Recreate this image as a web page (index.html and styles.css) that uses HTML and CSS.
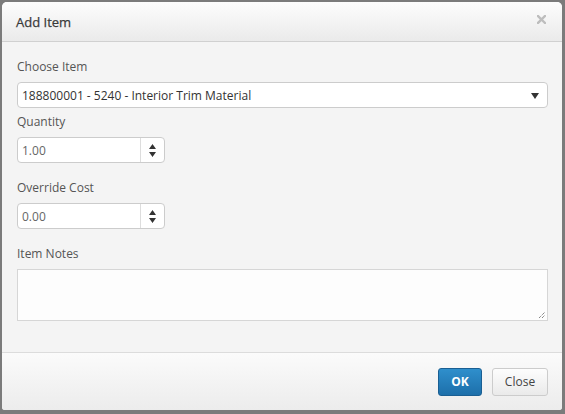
FILE: index.html
```html
<!DOCTYPE html>
<html>
<head>
<meta charset="utf-8">
<link rel="stylesheet" href="styles.css">
</head>
<body>
<div class="dialog">
  <div class="header">
    <span class="title">Add Item</span>
    <svg class="close-x" width="9" height="9" viewBox="0 0 9 9"><path d="M1 1L8 8M8 1L1 8" stroke="#bdbdbd" stroke-width="2.4" stroke-linecap="square"/></svg>
  </div>
  <div class="body">
    <label class="label lbl-choose">Choose Item</label>
    <div class="select">
      <span>188800001 - 5240 - Interior Trim Material</span>
      <svg class="caret" width="8" height="6" viewBox="0 0 8 6"><path d="M0 0H8L4 6Z" fill="#333"/></svg>
    </div>
    <label class="label lbl-qty">Quantity</label>
    <div class="spin">
      <span class="val">1.00</span>
      <span class="arrows"><svg width="7" height="13" viewBox="0 0 7 13"><path d="M3.5 0L7 5H0Z M0 8H7L3.5 13Z" fill="#333"/></svg></span>
    </div>
    <label class="label lbl-cost">Override Cost</label>
    <div class="spin">
      <span class="val">0.00</span>
      <span class="arrows"><svg width="7" height="13" viewBox="0 0 7 13"><path d="M3.5 0L7 5H0Z M0 8H7L3.5 13Z" fill="#333"/></svg></span>
    </div>
    <label class="label lbl-notes">Item Notes</label>
    <div class="textarea">
      <svg class="grip" width="8" height="8" viewBox="0 0 8 8"><path d="M1 7L7 1M4 7L7 4" stroke="#555" stroke-width="1" stroke-dasharray="1 1"/></svg>
    </div>
  </div>
  <div class="footer">
    <button class="btn ok">OK</button>
    <button class="btn close">Close</button>
  </div>
</div>
</body>
</html>
```
FILE: styles.css
```css
html, body { margin: 0; padding: 0; }
body {
  background: #7b7b7b;
  width: 565px;
  height: 414px;
  padding: 2px 3px 4px 2px;
  box-sizing: border-box;
  font-family: "Open Sans", "Liberation Sans", sans-serif;
  font-size: 12px;
  color: #555;
}
.dialog {
  height: 408px;
  background: #f4f4f4;
  border-radius: 5px 5px 3px 3px;
  display: flex;
  flex-direction: column;
  overflow: hidden;
}
.header {
  height: 39px;
  flex: none;
  border-bottom: 1px solid #d0d0d0;
  background: linear-gradient(#fdfdfd, #eaeaea);
  display: flex;
  align-items: center;
  justify-content: space-between;
  padding: 0 16px 0 14px;
}
.title { font-weight: normal; font-size: 13px; color: #3a3a3a; -webkit-text-stroke: 0.25px #3a3a3a; }
.close-x { margin-top: -4px; }
.body {
  flex: 1;
  padding: 0 14px 0 15px;
  display: flex;
  flex-direction: column;
  align-items: flex-start;
}
.label { display: block; font-size: 12px; color: #555; line-height: 16px; }
.lbl-choose { margin-top: 17px; }
.lbl-qty { margin-top: 6px; }
.lbl-cost { margin-top: 17px; }
.lbl-notes { margin-top: 17px; }
.select {
  margin-top: 7px;
  align-self: stretch;
  height: 24px;
  background: #fff;
  border: 1px solid #ccc;
  border-radius: 4px;
  display: flex;
  align-items: center;
  justify-content: space-between;
  padding: 0 8px 0 4px;
  color: #333;
  font-size: 12px;
}
.caret { margin-top: 1px; }
.spin {
  margin-top: 7px;
  width: 146px;
  height: 24px;
  background: #fff;
  border: 1px solid #ccc;
  border-radius: 4px;
  display: flex;
  align-items: stretch;
}
.val { flex: 1; display: flex; align-items: center; padding-left: 4px; color: #666; font-size: 12px; }
.arrows {
  width: 23px;
  border-left: 1px solid #ddd;
  display: flex;
  align-items: center;
  justify-content: center;
}
.textarea {
  margin-top: 7px;
  align-self: stretch;
  height: 50px;
  background: #fdfdfd;
  border: 1px solid #d6d6d6;
  position: relative;
}
.grip { position: absolute; right: 1px; bottom: 1px; }
.footer {
  height: 57px;
  flex: none;
  border-top: 1px solid #dcdcdc;
  background: linear-gradient(#fbfbfb, #ececec);
  display: flex;
  justify-content: flex-end;
  align-items: center;
  gap: 10px;
  padding: 0 14px 0 0;
}
.btn {
  font-family: "Open Sans", "Liberation Sans", sans-serif;
  font-size: 12px;
  border-radius: 3px;
  height: 28px;
  cursor: pointer;
}
.ok {
  width: 44px;
  background: linear-gradient(#2f8fcc, #1d6faa);
  border: 1px solid #1a5f93;
  color: #fff;
  font-weight: bold;
}
.close {
  width: 56px;
  background: linear-gradient(#fdfdfd, #eaeaea);
  border: 1px solid #ccc;
  color: #444;
  font-weight: normal;
}
```
